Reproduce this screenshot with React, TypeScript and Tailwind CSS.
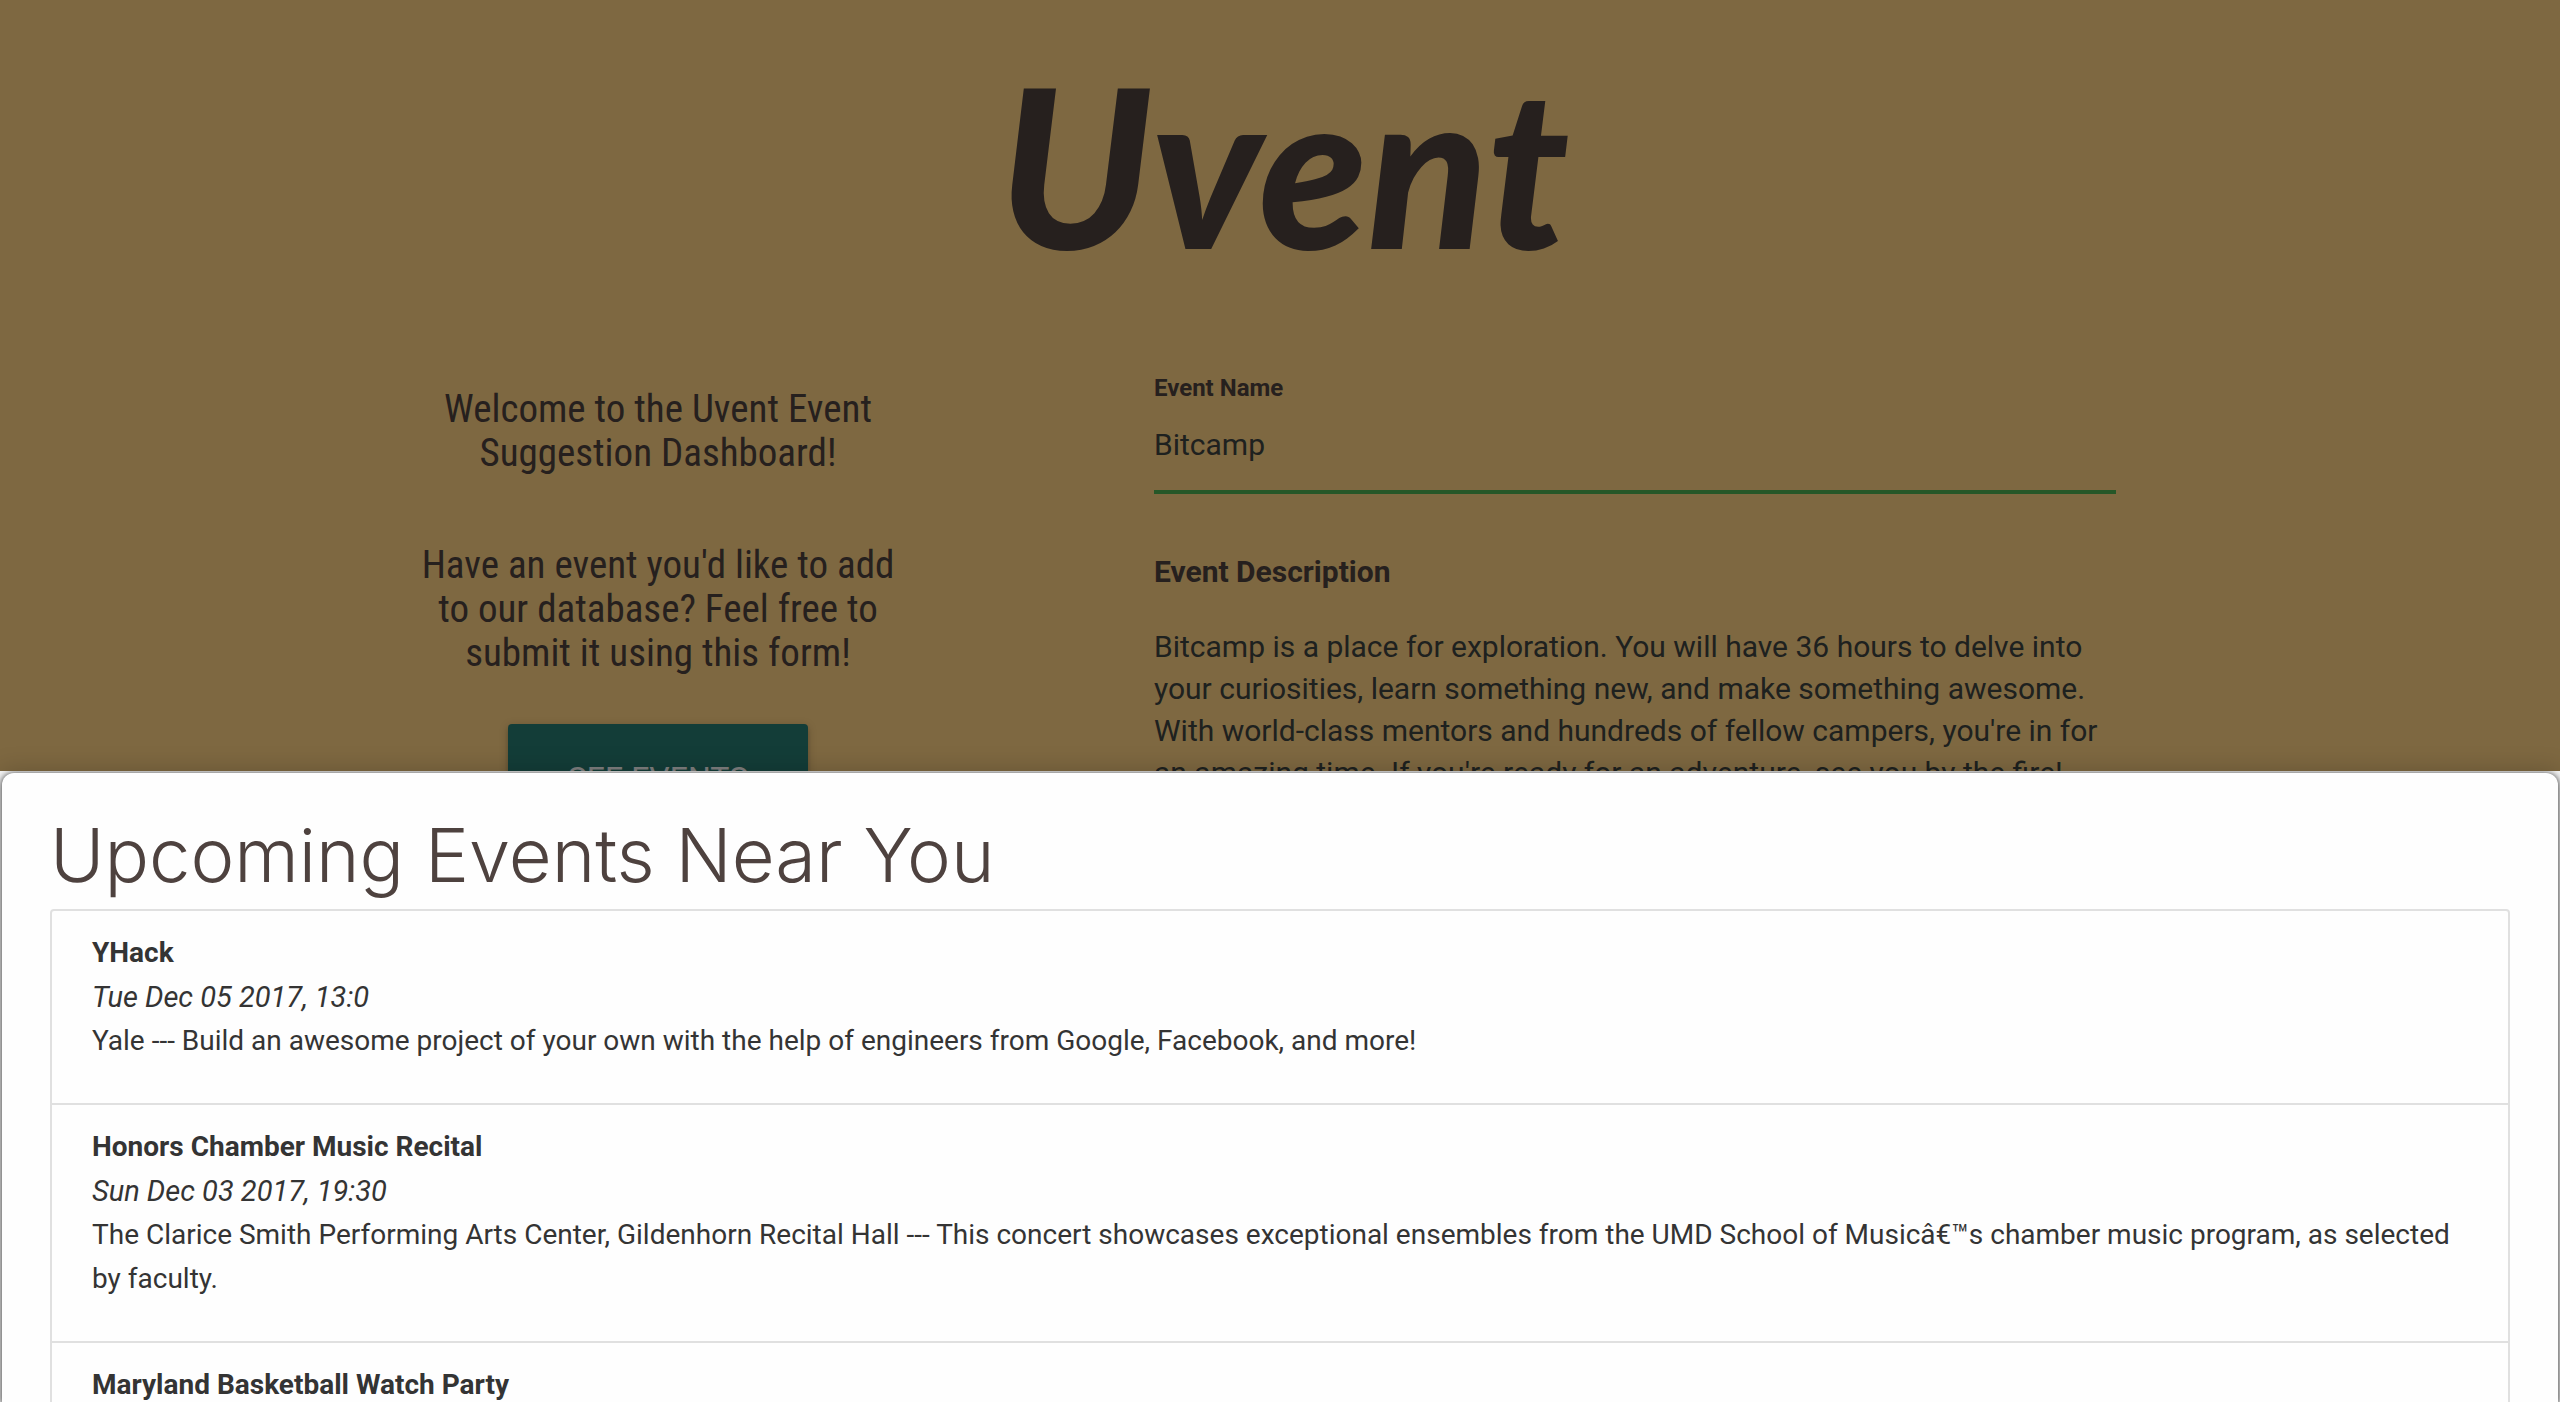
type EventItem = { name: string; time?: string; details?: string };

const events: EventItem[] = [
  {
    name: "YHack",
    time: "Tue Dec 05 2017, 13:0",
    details:
      "Yale --- Build an awesome project of your own with the help of engineers from Google, Facebook, and more!",
  },
  {
    name: "Honors Chamber Music Recital",
    time: "Sun Dec 03 2017, 19:30",
    details:
      "The Clarice Smith Performing Arts Center, Gildenhorn Recital Hall --- This concert showcases exceptional ensembles from the UMD School of Musicâ€™s chamber music program, as selected by faculty.",
  },
  { name: "Maryland Basketball Watch Party" },
];

function Intro() {
  return (
    <section className="flex flex-col items-center pt-[13px] text-center font-['Roboto_Condensed','Roboto',sans-serif] text-[39px] leading-[44px]">
      <p className="px-8">Welcome to the Uvent Event Suggestion Dashboard!</p>
      <p className="mt-[68px] px-8">
        Have an event you'd like to add to our database? Feel free to submit it using this form!
      </p>
      <button
        type="button"
        className="mt-[49px] h-[108px] w-[300px] rounded bg-[#267a70] font-['Roboto',sans-serif] text-[32px] font-normal text-white uppercase shadow-[0_4px_4px_rgba(0,0,0,0.14),0_2px_10px_rgba(0,0,0,0.2)]"
      >
        See events
      </button>
    </section>
  );
}

function SuggestionForm() {
  return (
    <form className="flex flex-col text-[30px]">
      <label htmlFor="event-name" className="text-2xl leading-7 font-bold">
        Event Name
      </label>
      <input
        id="event-name"
        type="text"
        defaultValue="Bitcamp"
        className="h-[92px] w-full border-b-4 border-[#4caf50] bg-transparent pb-1 text-[#3c423f] outline-none"
      />
      <label htmlFor="event-description" className="mt-[60px] leading-9 font-bold">
        Event Description
      </label>
      <textarea
        id="event-description"
        rows={6}
        className="mt-9 w-full resize-none overflow-hidden bg-transparent leading-[42px] text-[#3c423f] outline-none"
        defaultValue="Bitcamp is a place for exploration. You will have 36 hours to delve into your curiosities, learn something new, and make something awesome. With world-class mentors and hundreds of fellow campers, you're in for an amazing time. If you're ready for an adventure, see you by the fire!"
      />
    </form>
  );
}

function EventSheet() {
  return (
    <div
      role="dialog"
      aria-labelledby="sheet-title"
      className="absolute inset-x-0 bottom-0 h-[45%] bg-[#f2f2f2] shadow-[0_0_24px_rgba(0,0,0,0.2)]"
    >
      <div className="h-full overflow-hidden px-[2px] pt-[2px]">
        <div className="h-full rounded-t-xl bg-[#fefefe] px-12 pt-[42px] shadow-[0_1px_6px_1px_rgba(0,0,0,0.7)]">
          <h2
            id="sheet-title"
            className="font-['Inter',sans-serif] text-[74px] leading-[80px] font-light text-[#4e423f]"
          >
            Upcoming Events Near You
          </h2>
          <ul className="mt-[14px] rounded border-2 border-[#e0e0e0] text-[28px] leading-[44px] text-[#343434]">
            {events.map((event) => (
              <li key={event.name} className="border-b-2 border-[#e0e0e0] px-10 pt-5 pb-10 last:border-b-0">
                <h3 className="font-bold">{event.name}</h3>
                {event.time && <p className="text-[29px] italic">{event.time}</p>}
                {event.details && <p>{event.details}</p>}
              </li>
            ))}
          </ul>
        </div>
      </div>
    </div>
  );
}

export default function App() {
  return (
    <div className="relative h-screen overflow-hidden bg-[#fcd082] font-['Roboto',sans-serif] text-[#4c403c]">
      <main>
        <h1 className="pt-[43px] pl-2 text-center font-['Lato',sans-serif] text-[222px] leading-[240px] font-black italic">
          Uvent
        </h1>
        <div className="mt-[91px] grid grid-cols-[548fr_962fr] gap-[222px] pr-[444px] pl-96">
          <Intro />
          <SuggestionForm />
        </div>
      </main>
      <div className="absolute inset-0 bg-black/50" />
      <EventSheet />
    </div>
  );
}
